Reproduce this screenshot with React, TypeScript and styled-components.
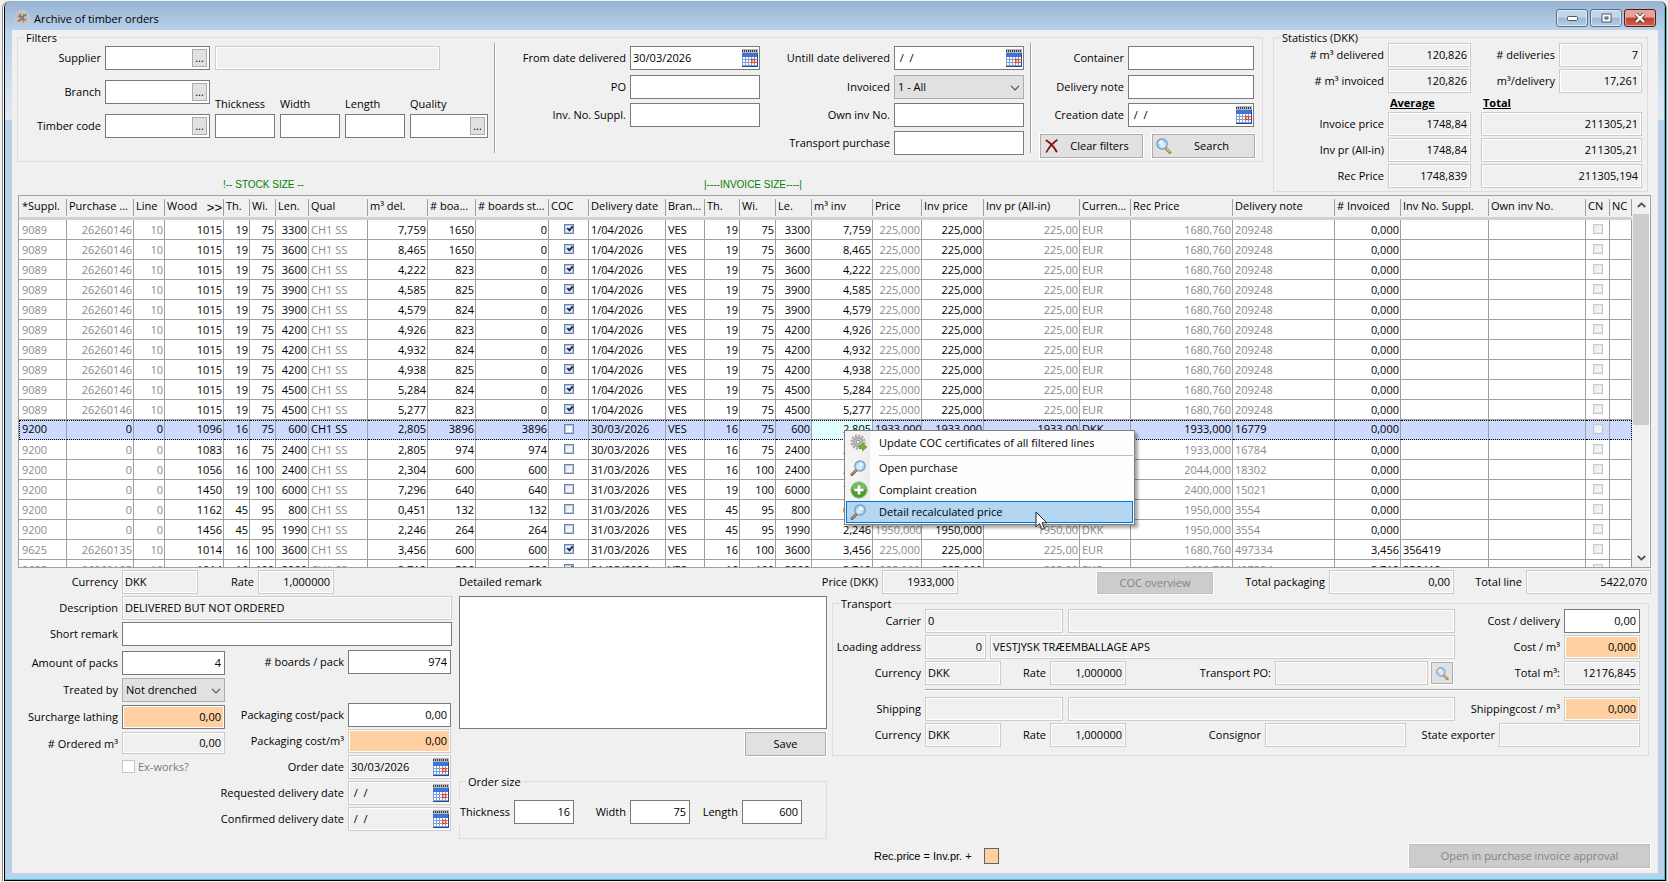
import React, { useId } from 'react';
import styled, { createGlobalStyle, css } from 'styled-components';

const color = {
  face: '#f0f0f0',
  ink: '#000000',
  muted: '#8a8a8a',
  edge: '#7a7a7a',
  softEdge: '#cccccc',
  group: '#dcdcdc',
  line: '#a0a0a0',
  highlight: '#ffd0a1',
  selected: '#cddafd',
};

const GlobalStyle = createGlobalStyle`
  *, *::before, *::after { box-sizing: border-box; }
  body {
    margin: 0;
    background: ${color.face};
    color: ${color.ink};
    font: 11px/15px 'Open Sans', 'Noto Sans', sans-serif;
  }
  button, input, select, textarea { font: inherit; color: inherit; border-radius: 0; margin: 0; }
`;

/* ---------- window ---------- */

const Window = styled.div`
  display: flex;
  flex-direction: column;
  height: calc(100vh - 2px);
  min-height: 760px;
  min-width: 1500px;
  margin: 1px 2px 1px 4px;
  border: solid #000;
  border-width: 0 1px 1px;
  border-radius: 7px 7px 0 0;
  box-shadow: -1px 0 #fff, -2px 0 #8a8a8a, 1px 0 #9a9a9a;
  overflow: hidden;
`;

const Frame = styled.div`
  flex: 1;
  min-height: 0;
  display: flex;
  flex-direction: column;
  padding: 0 6px 6px 7px;
  border: solid #3cc4dc;
  border-width: 0 1px 1px 0;
  background: linear-gradient(180deg, #97b3d1 0, #b9d1ea 29px, #dfe9f5 119px, #b9d1ea 119px);
`;

const TitleBar = styled.header`
  display: flex;
  align-items: center;
  gap: 4px;
  height: 29px;
  flex: none;
  padding: 5px 2px 0;
`;

const Title = styled.h1`
  flex: 1;
  margin: 0;
  font-size: 11px;
  font-weight: 400;
`;

const Captions = styled.div`
  display: flex;
  gap: 2px;
`;

const CaptionButton = styled.button<{ $close?: boolean }>`
  display: grid;
  place-items: center;
  width: 32px;
  height: 18px;
  padding: 0;
  border: 1px solid ${p => (p.$close ? '#4f1b1b' : '#56718f')};
  border-radius: 3px;
  box-shadow: inset 0 0 0 1px ${p => (p.$close ? '#e8a79c' : '#dbe7f3')};
  background: ${p => p.$close
    ? 'linear-gradient(#e5a298 0 45%, #c23f2a 50%, #cf5f49)'
    : 'linear-gradient(#c3d6ea 0 45%, #9db9d6 50%, #b6cfe8)'};
`;

const Page = styled.main`
  flex: 1;
  min-height: 0;
  display: flex;
  flex-direction: column;
  padding: 0 7px 5px 6px;
  background: ${color.face};
`;

/* ---------- shared controls ---------- */

const Group = styled.fieldset`
  min-width: 0;
  margin: 0;
  padding: 0;
  border: 1px solid ${color.group};
`;

const Legend = styled.legend`
  margin-left: 6px;
  padding: 0 2px;
  height: 15px;
`;

const Label = styled.label<{ $start?: boolean }>`
  display: flex;
  align-items: center;
  justify-content: ${p => (p.$start ? 'flex-start' : 'flex-end')};
  height: 24px;
  min-width: 0;
  padding-right: ${p => (p.$start ? 0 : 4)}px;
  padding-bottom: 2px;
  white-space: pre;
`;

type BoxProps = { $locked?: boolean; $right?: boolean; $hot?: boolean; $low?: boolean };

const boxLook = css<BoxProps>`
  border: 1px solid ${p => (p.$locked ? color.softEdge : color.edge)};
  background: ${p => (p.$hot ? color.highlight : p.$locked ? color.face : '#fff')};
  box-shadow: inset 0 0 0 1px #fff;
`;

const Box = styled.input<BoxProps>`
  ${boxLook}
  display: block;
  width: 100%;
  min-width: 0;
  height: ${p => (p.$low ? 22 : 24)}px;
  padding: 0 3px 2px 2px;
  text-align: ${p => (p.$right ? 'right' : 'left')};
  outline: none;
`;

const Combo = styled.div<BoxProps>`
  ${boxLook}
  display: flex;
  align-items: center;
  width: 100%;
  height: 24px;
  padding: 0 1px 0 2px;
`;

const ComboInput = styled.input`
  flex: 1;
  min-width: 0;
  height: 20px;
  padding: 0 0 2px;
  border: 0;
  outline: none;
  background: transparent;
`;

const MoreButton = styled.button`
  width: 15px;
  height: 18px;
  margin-right: 1px;
  padding: 0;
  border: 1px solid #adadad;
  background: #e1e1e1;
  line-height: 14px;
`;

const IconButton = styled.button`
  display: block;
  padding: 0;
  border: 0;
  background: none;
  line-height: 0;
`;

const SelectWrap = styled.div`
  position: relative;
  width: 100%;
  height: 24px;

  svg {
    position: absolute;
    right: 4px;
    top: 10px;
    pointer-events: none;
  }
`;

const SelectBox = styled.select`
  width: 100%;
  height: 24px;
  padding: 0 3px 2px;
  border: 1px solid #adadad;
  background: #e1e1e1;
  appearance: none;
`;

const Button = styled.button<{ $width?: number }>`
  display: flex;
  align-items: center;
  justify-content: center;
  width: ${p => (p.$width ? `${p.$width}px` : 'auto')};
  height: 24px;
  padding: 0 3px 1px;
  border: 1px solid #adadad;
  background: #e1e1e1;
  box-shadow: 0 0 0 1px #fff;
  white-space: nowrap;

  span { flex: 1; }

  &:disabled {
    border-color: #bfbfbf;
    background: #cccccc;
    color: #838383;
  }
`;

const Tick = styled.input<{ $dim?: boolean; $large?: boolean }>`
  appearance: none;
  display: block;
  position: relative;
  flex: none;
  width: ${p => (p.$large ? 13 : 10)}px;
  height: ${p => (p.$large ? 13 : 10)}px;
  border: 1px solid ${p => (p.$dim || p.$large ? '#c6c6c6' : '#6b80a3')};
  background: ${p => (p.$large ? '#fff' : 'linear-gradient(135deg, #e3e6ee, #fff)')};
  box-shadow: inset 0 0 0 1px ${p => (p.$large ? '#fff' : p.$dim ? '#e9e9e9' : '#bccadf')};

  &:checked::before {
    content: '';
    position: absolute;
    left: 3px;
    top: 0;
    width: 4px;
    height: 6px;
    border: solid #1d2f57;
    border-width: 0 2px 2px 0;
    transform: rotate(40deg);
  }
`;

/* ---------- icons ---------- */

const AppIcon = () => (
  <svg width="16" height="16" viewBox="0 0 16 16" aria-hidden="true">
    <circle cx="8" cy="8" r="7.8" fill="#c9c6c2" />
    <g stroke="#7d756f" strokeWidth="1" fill="none">
      <path d="M4 4l8 7M6.500 3.500l-.5 8M10 3.500l-1 9M3.500 7l9-1.500M3.500 10.500l9-1.500M12.500 3.500l-8.500 8.500" />
    </g>
  </svg>
);

const CalendarIcon = () => (
  <svg width="16" height="18" viewBox="0 0 16 18" aria-hidden="true">
    <rect x="0" y="0" width="16" height="18" fill="#b4b7bb" />
    <path d="M0 2h16" stroke="#3c3c3c" strokeWidth="2" strokeDasharray="1 1" />
    <rect x="0" y="4" width="15" height="13" fill="#fff" />
    <rect x="0" y="4" width="15" height="4" fill="#3f74da" />
    <path d="M0 10.500h15M0 13.500h15M3.500 8v9M6.500 8v9M9.500 8v9M12.500 8v9M.5 8v9M0 16.500h15" stroke="#7d9fd6" />
    <path d="M15.500 4v14M0 17.500h16" stroke="#2c4a86" />
    <rect x="9.700" y="10.500" width="3" height="3" fill="#fff" stroke="#e8481c" strokeWidth="1.400" />
  </svg>
);

const Chevron = () => (
  <svg width="10" height="6" viewBox="0 0 10 6" aria-hidden="true">
    <path d="M1 .8l4 4 4-4" fill="none" stroke="#555" strokeWidth="1.200" />
  </svg>
);

const Lens = ({ size = 16, mirrored = false }: { size?: number; mirrored?: boolean }) => (
  <svg width={size} height={size} viewBox="0 0 16 16" aria-hidden="true">
    <g transform={mirrored ? 'matrix(-1 0 0 1 16 0)' : undefined}>
      <path d="M9.500 10l4.500 4.500" stroke={mirrored ? '#5a5f78' : '#8a7c5a'} strokeWidth="3" strokeLinecap="round" />
      <path d="M10 10.200l3.800 3.800" stroke={mirrored ? '#e08a4a' : '#e3c16b'} strokeWidth="1.600" strokeLinecap="round" />
      <circle cx="6" cy="6" r="5.200" fill="#a8d3f4" stroke="#7e95b3" strokeWidth="1.200" />
      <circle cx="6.800" cy="7" r="2.800" fill="#d3ecfc" />
      <path d="M2.600 6a3.500 3.500 0 0 1 4.200-3.400c.4 2-1.700 3.700-4.200 3.400z" fill="#fff" opacity=".85" />
    </g>
  </svg>
);

const ClearIcon = () => (
  <svg width="16" height="16" viewBox="0 0 16 16" aria-hidden="true">
    <path d="M2.500 2.500c4 2.500 7.500 6.500 10 11" fill="none" stroke="#8b0f0f" strokeWidth="2" strokeLinecap="round" />
    <path d="M13 2C9 5 5 9 2.500 14" fill="none" stroke="#8b0f0f" strokeWidth="1.600" strokeLinecap="round" />
  </svg>
);

const GearIcon = () => (
  <svg width="18" height="18" viewBox="0 0 18 18" aria-hidden="true">
    <circle cx="8" cy="8" r="6.600" fill="none" stroke="#a3a3a3" strokeWidth="2" strokeDasharray="2.100 1.360" />
    <circle cx="8" cy="8" r="4.400" fill="#c4c4c4" stroke="#ababab" strokeWidth="2.400" />
    <circle cx="8" cy="8" r="1.800" fill="#f4f4f4" stroke="#8c8c8c" />
    <path d="M9 11.500h3.500V9l4.500 4-4.500 4v-2.500H9z" fill="#7db21a" stroke="#5d8c0e" strokeWidth=".6" />
  </svg>
);

const PlusIcon = () => (
  <svg width="18" height="18" viewBox="0 0 18 18" aria-hidden="true">
    <circle cx="9" cy="9" r="8.200" fill="#4f9a35" stroke="#9cc98c" />
    <path d="M2 8a7 7 0 0 1 14 0c-4 1.800-10 1.800-14 0z" fill="#8cc777" opacity=".7" />
    <path d="M9 4.500v9M4.500 9h9" stroke="#fff" strokeWidth="2.600" />
  </svg>
);

const Arrow = ({ up = false }: { up?: boolean }) => (
  <svg width="9" height="6" viewBox="0 0 9 6" aria-hidden="true">
    <path d={up ? 'M.8 5l3.700-3.600L8.200 5' : 'M.8 1l3.700 3.600L8.200 1'} fill="none" stroke="#505050" strokeWidth="1.800" />
  </svg>
);

/* ---------- field helpers ---------- */

type FieldProps = {
  label: string;
  value?: string;
  locked?: boolean;
  right?: boolean;
  hot?: boolean;
  low?: boolean;
};

const Field = ({ label, value = '', locked, right, hot, low }: FieldProps) => {
  const id = useId();
  return (
    <>
      <Label htmlFor={id}>{label}</Label>
      <Box id={id} defaultValue={value} readOnly={locked} $locked={locked} $right={right} $hot={hot} $low={low} />
    </>
  );
};

const DateField = ({ label, value = ' /  /', locked }: FieldProps) => {
  const id = useId();
  return (
    <>
      <Label htmlFor={id}>{label}</Label>
      <Combo $locked={locked}>
        <ComboInput id={id} defaultValue={value} readOnly={locked} />
        <IconButton type="button" aria-label={`Choose ${label.toLowerCase()}`}><CalendarIcon /></IconButton>
      </Combo>
    </>
  );
};

const LookupField = ({ label }: FieldProps) => {
  const id = useId();
  return (
    <>
      <Label htmlFor={id}>{label}</Label>
      <Combo>
        <ComboInput id={id} />
        <MoreButton type="button" aria-label={`Look up ${label.toLowerCase()}`}>...</MoreButton>
      </Combo>
    </>
  );
};

const SelectField = ({ label, options }: { label: string; options: string[] }) => {
  const id = useId();
  return (
    <>
      <Label htmlFor={id}>{label}</Label>
      <SelectWrap>
        <SelectBox id={id}>{options.map(o => <option key={o}>{o}</option>)}</SelectBox>
        <Chevron />
      </SelectWrap>
    </>
  );
};

/* ---------- filters and statistics ---------- */

const TopRow = styled.div`
  display: flex;
  gap: 10px;
  padding: 0 3px 0 0;
  margin-left: -1px;
`;

const FilterColumn = styled.div`
  flex: 1;
  min-width: 0;
  display: flex;
  flex-direction: column;
  justify-content: space-between;
`;

const FilterBody = styled.div`
  display: flex;
  padding: 1px 7px 3px 0;
`;

const LookupGrid = styled.div`
  display: grid;
  grid-template-columns: 87px 105px 283px;
  grid-template-rows: 24px 24px 24px;
  row-gap: 10px;
  align-content: start;
  width: 476px;
`;

const SupplierName = styled.div`
  padding: 0 53px 0 5px;
`;

const SizeFields = styled.div`
  grid-column: 3;
  grid-row: 2 / 4;
  align-self: end;
  display: grid;
  grid-template-columns: 60px 60px 60px 78px;
  gap: 0 5px;
  padding-left: 5px;
`;

const SizeLabel = styled.label`
  height: 18px;
`;

const Divider = styled.div`
  width: 2px;
  margin: -3px 0 5px;
  border-left: 1px solid ${color.line};
  background: #fff;
`;

const FieldGrid = styled.div`
  flex: 1;
  display: grid;
  grid-template-columns: 1fr 130px;
  grid-template-rows: 25px repeat(3, 24px);
  row-gap: 4px;
  align-content: start;
`;

const DeliverySide = styled.div`
  width: 223px;
`;

const DeliveryGrid = styled.div`
  display: grid;
  grid-template-columns: 1fr 126px;
  grid-template-rows: 25px 24px 24px;
  row-gap: 4px;
  margin-right: 1px;
`;

const FilterButtons = styled.div`
  display: flex;
  justify-content: flex-end;
  gap: 9px;
  margin-top: 7px;
`;

const Gutter = styled.div`
  width: 6px;
`;

const SizeCaptions = styled.div`
  display: grid;
  grid-template-columns: 481px auto;
  justify-content: start;
  padding-left: 206px;
  color: #008000;
  font-family: 'Liberation Sans', sans-serif;
  font-size: 10px;
`;

const StatsGroup = styled(Group)`
  width: 375px;
`;

const StatsGrid = styled.div`
  display: grid;
  grid-template-columns: 1fr 83px 88px 83px;
  grid-template-rows: 24px 24px 15px repeat(3, 24px);
  row-gap: 2px;
  margin-top: -2px;
  padding: 0 5px 3px 0;
`;

const StatsHead = styled.strong`
  padding-left: 2px;
  text-decoration: underline;
`;

const TotalHead = styled(StatsHead)`
  grid-column: 3 / 5;
  padding-left: 12px;
`;

const TotalCell = styled.div`
  grid-column: 3 / 5;
  padding-left: 10px;
`;

const Filters = () => (
  <Group>
    <Legend>Filters</Legend>
    <FilterBody>
      <LookupGrid>
        <LookupField label="Supplier" />
        <SupplierName><Box aria-label="Supplier name" readOnly $locked /></SupplierName>
        <LookupField label="Branch" />
        <SizeFields>
          <SizeLabel htmlFor="f-thickness">Thickness</SizeLabel>
          <SizeLabel htmlFor="f-width">Width</SizeLabel>
          <SizeLabel htmlFor="f-length">Length</SizeLabel>
          <SizeLabel htmlFor="f-quality">Quality</SizeLabel>
          <Box id="f-thickness" />
          <Box id="f-width" />
          <Box id="f-length" />
          <Combo>
            <ComboInput id="f-quality" />
            <MoreButton type="button" aria-label="Look up quality">...</MoreButton>
          </Combo>
        </SizeFields>
        <LookupField label="Timber code" />
      </LookupGrid>
      <Divider />
      <FieldGrid>
        <DateField label="From date delivered" value="30/03/2026" />
        <Field label="PO" />
        <Field label="Inv. No. Suppl." />
      </FieldGrid>
      <FieldGrid>
        <DateField label="Untill date delivered" />
        <SelectField label="Invoiced" options={['1 - All']} />
        <Field label="Own inv No." />
        <Field label="Transport purchase" />
      </FieldGrid>
      <Gutter />
      <Divider />
      <DeliverySide>
        <DeliveryGrid>
          <Field label="Container" />
          <Field label="Delivery note" />
          <DateField label="Creation date" />
        </DeliveryGrid>
        <FilterButtons>
          <Button type="button" $width={103}><ClearIcon /><span>Clear filters</span></Button>
          <Button type="button" $width={103}><Lens /><span>Search</span></Button>
        </FilterButtons>
      </DeliverySide>
    </FilterBody>
  </Group>
);

const averages = [
  ['Invoice price', '1748,84', '211305,21'],
  ['Inv pr (All-in)', '1748,84', '211305,21'],
  ['Rec Price', '1748,839', '211305,194'],
];

const Statistics = () => (
  <StatsGroup>
    <Legend>Statistics (DKK)</Legend>
    <StatsGrid>
      <Field label="# m³ delivered" value="120,826" locked right />
      <Field label="# deliveries" value="7" locked right />
      <Field label="# m³ invoiced" value="120,826" locked right />
      <Field label="m³/delivery" value="17,261" locked right />
      <span />
      <StatsHead>Average</StatsHead>
      <TotalHead>Total</TotalHead>
      {averages.map(([label, avg, total]) => (
        <React.Fragment key={label}>
          <Field label={label} value={avg} locked right />
          <TotalCell><Box aria-label={`${label} total`} defaultValue={total} readOnly $locked $right /></TotalCell>
        </React.Fragment>
      ))}
    </StatsGrid>
  </StatsGroup>
);

/* ---------- order grid ---------- */

const GridFrame = styled.section`
  position: relative;
  flex: 1;
  min-height: 0;
  display: flex;
  margin-top: 3px;
  border: 1px solid ${color.line};
  background: #fff;
  overflow: hidden;
`;

const GridView = styled.div`
  flex: 1;
  min-width: 0;
  overflow: hidden;
`;

const OrderTable = styled.table`
  width: 100%;
  table-layout: fixed;
  border-collapse: separate;
  border-spacing: 0;
`;

const HeadCell = styled.th`
  height: 24px;
  padding: 3px 0 1px;
  border-bottom: 3px solid #d0d0d0;
  background: ${color.face};
  font-weight: 400;
  text-align: left;
`;

const HeadText = styled.div<{ $first?: boolean }>`
  display: flex;
  justify-content: space-between;
  height: 17px;
  line-height: 14px;
  padding: 0 1px 0 ${p => (p.$first ? 3 : 2)}px;
  border-right: 1px solid ${color.line};
  white-space: nowrap;

  b {
    font: 13px/17px 'Liberation Sans', sans-serif;
  }
`;

const Cell = styled.td<{ $right?: boolean; $faded?: boolean }>`
  height: 20px;
  padding: 0 1px 1px 2px;
  border: solid ${color.line};
  border-width: 0 1px 1px 0;
  line-height: 17px;
  text-align: ${p => (p.$right ? 'right' : 'left')};
  color: ${p => (p.$faded ? color.muted : color.ink)};
  white-space: nowrap;
  overflow: hidden;

  &:first-child { padding-left: 3px; }

  ${Tick} { margin: 0 auto; }
`;

const Row = styled.tr<{ $selected?: boolean }>`
  ${p => p.$selected && css`
    background: ${color.selected};

    ${Cell} {
      color: ${color.ink};
      padding-bottom: 2px;
      border-top: 1px dotted #000;
      border-bottom: 1px dotted #000;
      line-height: 16px;
    }
    ${Cell}:first-child { border-left: 1px dotted #000; padding-left: 2px; }
    ${Cell}:last-child { border-right: 1px dotted #000; }
    ${Cell}:nth-child(18) { background: #e0ffff; }
  `}
`;

const ScrollBar = styled.div`
  display: flex;
  flex-direction: column;
  width: 18px;
  padding-left: 1px;
  background: ${color.face};
  border-right: 1px solid #fff;
`;

const ScrollArrow = styled.button`
  display: grid;
  place-items: center;
  height: 18px;
  padding: 0;
  border: 0;
  background: ${color.face};
`;

const ScrollTrack = styled.div`
  flex: 1;
`;

const ScrollThumb = styled.div`
  height: 63%;
  background: #cdcdcd;
`;

type Column = { title: string; width: number; right?: boolean; faded?: boolean; mark?: string };

const columns: Column[] = [
  { title: '*Suppl.', width: 48, faded: true },
  { title: 'Purchase ...', width: 67, right: true, faded: true },
  { title: 'Line', width: 31, right: true, faded: true },
  { title: 'Wood', width: 59, right: true, mark: '>>' },
  { title: 'Th.', width: 26, right: true },
  { title: 'Wi.', width: 26, right: true },
  { title: 'Len.', width: 33, right: true },
  { title: 'Qual', width: 59, faded: true },
  { title: 'm³ del.', width: 60, right: true },
  { title: '# boa...', width: 48, right: true },
  { title: '# boards st...', width: 73, right: true },
  { title: 'COC', width: 40 },
  { title: 'Delivery date', width: 77 },
  { title: 'Bran...', width: 39 },
  { title: 'Th.', width: 35, right: true },
  { title: 'Wi.', width: 36, right: true },
  { title: 'Le.', width: 36, right: true },
  { title: 'm³ inv', width: 61, right: true },
  { title: 'Price', width: 49, right: true, faded: true },
  { title: 'Inv price', width: 62, right: true },
  { title: 'Inv pr (All-in)', width: 96, right: true, faded: true },
  { title: 'Curren...', width: 51, faded: true },
  { title: 'Rec Price', width: 102, right: true, faded: true },
  { title: 'Delivery note', width: 102, faded: true },
  { title: '# Invoiced', width: 66, right: true },
  { title: 'Inv No. Suppl.', width: 88 },
  { title: 'Own inv No.', width: 97 },
  { title: 'CN', width: 24 },
  { title: 'NC', width: 22 },
];

type Order = {
  suppl: string; po: string; line: string; wood: string; th: string; wi: string; len: string;
  vol: string; boards: string; stock: string; coc: boolean; date: string;
  price: string; cur: string; rec: string; note: string; invoiced?: string; invNo?: string;
};

const fromPurchase = (len: string, vol: string, boards: string): Order => ({
  suppl: '9089', po: '26260146', line: '10', wood: '1015', th: '19', wi: '75', len, vol, boards,
  stock: '0', coc: true, date: '1/04/2026', price: '225,00', cur: 'EUR', rec: '1680,760', note: '209248',
});

const unplanned = (
  wood: string, th: string, wi: string, len: string, vol: string, boards: string,
  date: string, price: string, note: string,
): Order => ({
  suppl: '9200', po: '0', line: '0', wood, th, wi, len, vol, boards, stock: boards, coc: false,
  date, price, cur: 'DKK', rec: `${price}0`, note,
});

const invoicedOrder = (len: string, vol: string, boards: string): Order => ({
  suppl: '9625', po: '26260135', line: '10', wood: '1014', th: '16', wi: '100', len, vol, boards,
  stock: boards, coc: true, date: '31/03/2026', price: '225,00', cur: 'EUR', rec: '1680,760',
  note: '497334', invoiced: vol, invNo: '356419',
});

const orders: Order[] = [
  fromPurchase('3300', '7,759', '1650'),
  fromPurchase('3600', '8,465', '1650'),
  fromPurchase('3600', '4,222', '823'),
  fromPurchase('3900', '4,585', '825'),
  fromPurchase('3900', '4,579', '824'),
  fromPurchase('4200', '4,926', '823'),
  fromPurchase('4200', '4,932', '824'),
  fromPurchase('4200', '4,938', '825'),
  fromPurchase('4500', '5,284', '824'),
  fromPurchase('4500', '5,277', '823'),
  unplanned('1096', '16', '75', '600', '2,805', '3896', '30/03/2026', '1933,00', '16779'),
  unplanned('1083', '16', '75', '2400', '2,805', '974', '30/03/2026', '1933,00', '16784'),
  unplanned('1056', '16', '100', '2400', '2,304', '600', '31/03/2026', '2044,00', '18302'),
  unplanned('1450', '19', '100', '6000', '7,296', '640', '31/03/2026', '2400,00', '15021'),
  unplanned('1162', '45', '95', '800', '0,451', '132', '31/03/2026', '1950,00', '3554'),
  unplanned('1456', '45', '95', '1990', '2,246', '264', '31/03/2026', '1950,00', '3554'),
  invoicedOrder('3600', '3,456', '600'),
  invoicedOrder('3900', '3,719', '596'),
];

const SELECTED = 10;

const cellsOf = (o: Order): React.ReactNode[] => [
  o.suppl, o.po, o.line, o.wood, o.th, o.wi, o.len, 'CH1 SS', o.vol, o.boards, o.stock,
  <Tick type="checkbox" defaultChecked={o.coc} aria-label="COC" />,
  o.date, 'VES', o.th, o.wi, o.len, o.vol, `${o.price}0`, `${o.price}0`, o.price, o.cur, o.rec, o.note,
  o.invoiced ?? '0,000', o.invNo ?? '', '',
  <Tick type="checkbox" disabled $dim aria-label="CN" />,
  '',
];

/* ---------- context menu ---------- */

const Menu = styled.ul`
  position: absolute;
  left: 825px;
  top: 234px;
  width: 291px;
  margin: 0;
  padding: 1px;
  list-style: none;
  border: 1px solid #808080;
  background: linear-gradient(90deg, #f4f4f4 0 12px, #ececec 25px, #fdfdfd 25px);
  box-shadow: 3px 3px 3px rgba(0, 0, 0, 0.35);
`;

const MenuRule = styled.li`
  height: 1px;
  margin: 1px 0 1px 33px;
  background: #bdbdbd;
`;

const MenuButton = styled.button<{ $active?: boolean }>`
  display: flex;
  align-items: center;
  width: 100%;
  height: 22px;
  padding: 0 0 1px 3px;
  border: 1px solid ${p => (p.$active ? '#0078d7' : 'transparent')};
  background: ${p => (p.$active ? '#b3d7f3' : 'transparent')};
  text-align: left;
`;

const MenuIcon = styled.span`
  width: 29px;
  line-height: 0;
`;

const Pointer = styled.svg`
  position: absolute;
  left: 190px;
  top: 80px;
  z-index: 1;
`;

const ContextMenu = () => (
  <Menu role="menu">
    <li><MenuButton role="menuitem"><MenuIcon><GearIcon /></MenuIcon>Update COC certificates of all filtered lines</MenuButton></li>
    <MenuRule role="separator" />
    <li><MenuButton role="menuitem"><MenuIcon><Lens mirrored /></MenuIcon>Open purchase</MenuButton></li>
    <li><MenuButton role="menuitem"><MenuIcon><PlusIcon /></MenuIcon>Complaint creation</MenuButton></li>
    <li><MenuButton role="menuitem" $active><MenuIcon><Lens mirrored /></MenuIcon>Detail recalculated price</MenuButton></li>
    <Pointer width="13" height="20" viewBox="0 0 13 20" aria-hidden="true">
      <path d="M1 1v15l3.500-3.300L7 18.500l2.400-1L7 11.800h4.800z" fill="#fff" stroke="#222" />
    </Pointer>
  </Menu>
);

const OrderGrid = () => (
  <GridFrame>
    <GridView>
      <OrderTable>
        <colgroup>{columns.map((c, i) => <col key={i} width={c.width} />)}</colgroup>
        <thead>
          <tr>
            {columns.map((c, i) => (
              <HeadCell key={i} scope="col">
                <HeadText $first={i === 0}><span>{c.title}</span>{c.mark && <b>{c.mark}</b>}</HeadText>
              </HeadCell>
            ))}
          </tr>
        </thead>
        <tbody>
          {orders.map((o, r) => (
            <Row key={r} $selected={r === SELECTED}>
              {cellsOf(o).map((value, i) => (
                <Cell key={i} $right={columns[i].right} $faded={columns[i].faded}>{value}</Cell>
              ))}
            </Row>
          ))}
        </tbody>
      </OrderTable>
    </GridView>
    <ScrollBar>
      <ScrollArrow type="button" aria-label="Scroll up"><Arrow up /></ScrollArrow>
      <ScrollTrack><ScrollThumb /></ScrollTrack>
      <ScrollArrow type="button" aria-label="Scroll down"><Arrow /></ScrollArrow>
    </ScrollBar>
    <ContextMenu />
  </GridFrame>
);

/* ---------- order details ---------- */

const Details = styled.div`
  flex: none;
  display: flex;
  gap: 7px;
  margin-top: 2px;
`;

const OrderSide = styled.div`
  width: 434px;
  display: flex;
  flex-direction: column;
  gap: 2px;
`;

const CurrencyRow = styled.div`
  display: grid;
  grid-template-columns: 104px 76px 60px 76px;
`;

const WideRow = styled.div`
  display: grid;
  grid-template-columns: 104px 1fr;
`;

const PackColumns = styled.div`
  display: flex;
  margin-top: 2px;
`;

const PackGrid = styled.div`
  display: grid;
  grid-template-columns: 104px 103px;
  grid-auto-rows: min-content;
  row-gap: 3px;
  margin-top: 1px;
`;

const ExWorks = styled.label`
  grid-column: 2;
  display: flex;
  align-items: center;
  gap: 3px;
  height: 15px;
  color: ${color.edge};
`;

const CostGrid = styled.div`
  display: grid;
  grid-template-columns: 123px 103px;
  grid-template-rows: 51px;
  grid-auto-rows: 24px;
  row-gap: 2px;
`;

const RightSide = styled.div`
  flex: 1;
  min-width: 0;
`;

const TotalsRow = styled.div`
  display: grid;
  grid-template-columns: 300px 123px 76px 1fr 116px 125px 72px 125px;
  margin-bottom: 2px;
`;

const CocButton = styled(Button)`
  justify-self: end;
  align-self: end;
  height: 22px;
`;

const Panels = styled.div`
  display: flex;
  gap: 5px;
`;

const RemarkColumn = styled.div`
  display: flex;
  flex-direction: column;
  width: 368px;
`;

const Remark = styled.textarea`
  display: block;
  width: 100%;
  height: 133px;
  border: 1px solid ${color.edge};
  background: #fff;
  resize: none;
  outline: none;
`;

const SaveRow = styled.div`
  display: flex;
  justify-content: flex-end;
  margin: 3px 1px 18px 0;
`;

const SizeRow = styled.div`
  display: grid;
  grid-template-columns: 55px 60px 56px 60px 52px 60px;
  margin: 11px 0 14px -1px;

  ${Label} { background: ${color.face}; }
`;

const TransportGroup = styled(Group)`
  flex: 1;
  align-self: flex-start;
  margin-right: 2px;
`;

const TransportRows = styled.div`
  display: flex;
  flex-direction: column;
  gap: 2px;
  margin-top: -2px;
  padding: 0 8px 8px 0;
`;

const TransportRow = styled.div<{ $columns: string }>`
  display: grid;
  grid-template-columns: ${p => p.$columns};
`;

const TransportRule = styled.hr`
  height: 2px;
  width: auto;
  margin: 2px 0 4px 92px;
  border: 0;
  border-top: 1px solid ${color.line};
  background: #fff;
`;

const LookButton = styled(Button)`
  width: 22px;
  height: 22px;
  margin: 1px 3px;
  padding: 0;
`;

const Footer = styled.footer`
  display: flex;
  align-items: center;
  gap: 12px;
  margin: 5px 1px 0 415px;
`;

const FormulaNote = styled.span`
  font-family: 'Liberation Sans', sans-serif;
`;

const Swatch = styled.span`
  width: 15px;
  height: 16px;
  border: 1px solid #666;
  background: ${color.highlight};
`;

const ApprovalButton = styled(Button)`
  width: 241px;
  margin-left: auto;
`;

const OrderFields = () => (
  <OrderSide>
    <CurrencyRow>
      <Field label="Currency" value="DKK" locked />
      <Field label="Rate" value="1,000000" locked right />
    </CurrencyRow>
    <WideRow><Field label="Description" value="DELIVERED BUT NOT ORDERED" locked /></WideRow>
    <WideRow><Field label="Short remark" /></WideRow>
    <PackColumns>
      <PackGrid>
        <Field label="Amount of packs" value="4" right />
        <SelectField label="Treated by" options={['Not drenched']} />
        <Field label="Surcharge lathing" value="0,00" right hot />
        <Field label="# Ordered m³" value="0,00" right locked low />
        <ExWorks><Tick type="checkbox" disabled $large />Ex-works?</ExWorks>
      </PackGrid>
      <CostGrid>
        <Field label="# boards / pack" value="974" right />
        <Field label="Packaging cost/pack" value="0,00" right />
        <Field label="Packaging cost/m³" value="0,00" right locked hot />
        <DateField label="Order date" value="30/03/2026" locked />
        <DateField label="Requested delivery date" locked />
        <DateField label="Confirmed delivery date" locked />
      </CostGrid>
    </PackColumns>
  </OrderSide>
);

const Transport = () => (
  <TransportGroup>
    <Legend>Transport</Legend>
    <TransportRows>
      <TransportRow $columns="92px 138px 5px 1fr 109px 76px">
        <Field label="Carrier" value="0" locked />
        <span />
        <Box aria-label="Carrier name" readOnly $locked />
        <Field label="Cost / delivery" value="0,00" right />
      </TransportRow>
      <TransportRow $columns="92px 61px 4px 1fr 109px 76px">
        <Field label="Loading address" value="0" locked right />
        <span />
        <Box aria-label="Loading address name" defaultValue="VESTJYSK TRÆEMBALLAGE APS" readOnly $locked />
        <Field label="Cost / m³" value="0,000" locked right hot />
      </TransportRow>
      <TransportRow $columns="92px 76px 49px 76px 1fr 153px 28px 108px 76px">
        <Field label="Currency" value="DKK" locked />
        <Field label="Rate" value="1,000000" locked right />
        <Field label="Transport PO:" locked />
        <LookButton type="button" aria-label="Open transport PO"><Lens size={13} /></LookButton>
        <Field label="Total m³:" value="12176,845" locked right />
      </TransportRow>
      <TransportRule />
      <TransportRow $columns="92px 138px 5px 1fr 109px 76px">
        <Field label="Shipping" locked />
        <span />
        <Box aria-label="Shipping name" readOnly $locked />
        <Field label="Shippingcost / m³" value="0,000" locked right hot />
      </TransportRow>
      <TransportRow $columns="92px 76px 49px 76px 1fr 141px 93px 141px">
        <Field label="Currency" value="DKK" locked />
        <Field label="Rate" value="1,000000" locked right />
        <Field label="Consignor" locked />
        <Field label="State exporter" locked />
      </TransportRow>
    </TransportRows>
  </TransportGroup>
);

export default function App() {
  return (
    <>
      <GlobalStyle />
      <Window>
        <Frame>
          <TitleBar>
            <AppIcon />
            <Title>Archive of timber orders</Title>
            <Captions>
              <CaptionButton type="button" aria-label="Minimize">
                <svg width="11" height="6" aria-hidden="true"><rect x=".5" y="1.500" width="10" height="4" rx="1" fill="#fff" stroke="#4b5868" /></svg>
              </CaptionButton>
              <CaptionButton type="button" aria-label="Restore">
                <svg width="11" height="10" aria-hidden="true">
                  <rect x="1" y="1" width="9" height="8" fill="#fff" stroke="#4b5868" />
                  <rect x="4" y="4" width="3" height="2" fill="#9db9d6" stroke="#4b5868" />
                </svg>
              </CaptionButton>
              <CaptionButton type="button" aria-label="Close" $close>
                <svg width="12" height="10" viewBox="0 0 12 10" aria-hidden="true">
                  <path d="M2 1l8 8M10 1L2 9" stroke="#4b3a3f" strokeWidth="4" />
                  <path d="M2 1l8 8M10 1L2 9" stroke="#fff" strokeWidth="2.400" />
                </svg>
              </CaptionButton>
            </Captions>
          </TitleBar>
          <Page>
            <TopRow>
              <FilterColumn>
                <Filters />
                <SizeCaptions>
                  <span>!-- STOCK SIZE --</span>
                  <span>|----INVOICE SIZE----|</span>
                </SizeCaptions>
              </FilterColumn>
              <Statistics />
            </TopRow>
            <OrderGrid />
            <Details>
              <OrderFields />
              <RightSide>
                <TotalsRow>
                  <Label htmlFor="remark" $start>Detailed remark</Label>
                  <Field label="Price (DKK)" value="1933,000" locked right />
                  <CocButton type="button" disabled $width={116}>COC overview</CocButton>
                  <Field label="Total packaging" value="0,00" locked right />
                  <Field label="Total line" value="5422,070" locked right />
                </TotalsRow>
                <Panels>
                  <RemarkColumn>
                    <Remark id="remark" />
                    <SaveRow><Button type="button" $width={81}>Save</Button></SaveRow>
                    <Group>
                      <Legend>Order size</Legend>
                      <SizeRow>
                        <Field label="Thickness" value="16" right />
                        <Field label="Width" value="75" right />
                        <Field label="Length" value="600" right />
                      </SizeRow>
                    </Group>
                  </RemarkColumn>
                  <Transport />
                </Panels>
                <Footer>
                  <FormulaNote>Rec.price = Inv.pr. +</FormulaNote>
                  <Swatch />
                  <ApprovalButton type="button" disabled>Open in purchase invoice approval</ApprovalButton>
                </Footer>
              </RightSide>
            </Details>
          </Page>
        </Frame>
      </Window>
    </>
  );
}
